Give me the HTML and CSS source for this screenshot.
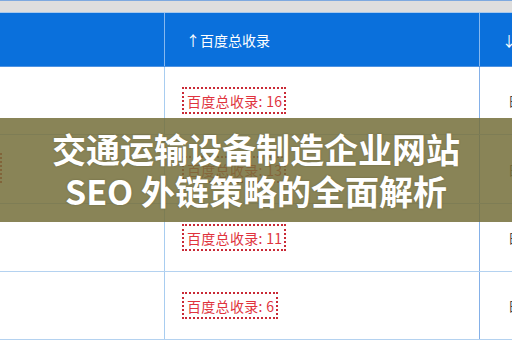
FILE: index.html
```html
<!DOCTYPE html>
<html lang="zh">
<head>
<meta charset="utf-8">
<link rel="stylesheet" href="styles.css">
</head>
<body>
<div class="page">
  <div class="topbar"></div>
  <div class="table">
    <div class="row head">
      <div class="cell c1"></div>
      <div class="cell c2">↑百度总收录</div>
      <div class="cell c3">↓本站</div>
    </div>
    <div class="row r1">
      <div class="cell c1"></div>
      <div class="cell c2"><span class="tag">百度总收录: 16</span></div>
      <div class="cell c3"><span class="gray">日期</span></div>
    </div>
    <div class="row r2">
      <div class="cell c1"><span class="cut"></span></div>
      <div class="cell c2"><span class="tag">百度总收录: 13</span></div>
      <div class="cell c3"><span class="gray">日期</span></div>
    </div>
    <div class="row r3">
      <div class="cell c1"></div>
      <div class="cell c2"><span class="tag">百度总收录: 11</span></div>
      <div class="cell c3"><span class="gray">日期</span></div>
    </div>
    <div class="row r4">
      <div class="cell c1"></div>
      <div class="cell c2"><span class="tag">百度总收录: 6</span></div>
      <div class="cell c3"><span class="gray">日期</span></div>
    </div>
  </div>
  <div class="overlay">
    <div class="title">交通运输设备制造企业网站</div>
    <div class="title">SEO 外链策略的全面解析</div>
  </div>
</div>
</body>
</html>
```

FILE: styles.css
```css
html, body {
  margin: 0;
  padding: 0;
  background: #ffffff;
}
.page {
  position: relative;
  width: 512px;
  height: 340px;
  overflow: hidden;
  font-family: "Noto Sans CJK SC", "Noto Sans", sans-serif;
}
.topbar {
  height: 11px;
  background: #dedede;
  border-top: 1px solid #7ea9df;
}
.row {
  display: grid;
  grid-template-columns: 165px 315px 80px;
  border-bottom: 1px solid #b4d2f0;
}
.cell {
  display: flex;
  align-items: center;
  border-right: 1px solid #9cc2ec;
  white-space: nowrap;
  min-width: 0;
}
.c2 { padding-left: 17px; }
.c3 { border-right: none; }

.head {
  height: 53px;
  background: #0a70dc;
  border-top: 1px solid #a9c9ec;
  border-bottom: 1px solid #4f93e2;
  color: #ffffff;
  font-size: 14px;
}
.head .cell { border-right-color: #86b8ef; }
.head .c2 { padding-left: 21px; }
.head .c3 { padding-left: 22px; }

.r1, .r3, .r4 { height: 67px; }
.r2 { height: 68px; }
.r1 .c1, .r2 .c1, .r3 .c1, .r4 .c1 { border-right-color: #a8cdf0; }
.r1 .c2, .r2 .c2, .r3 .c2, .r4 .c2 { border-right-color: #84b0e8; }

.tag {
  display: inline-block;
  border: 2px dotted #c92a36;
  color: #e0333d;
  font-size: 14px;
  line-height: 18px;
  padding: 3px 2px 2px 3px;
  letter-spacing: 0.3px;
}
.gray {
  color: #444444;
  font-size: 13px;
  padding-left: 28px;
}
.cut {
  display: block;
  width: 40px;
  height: 26px;
  margin-left: -42px;
  margin-top: -3px;
  border: 2px dotted #c92a36;
}

.overlay {
  position: absolute;
  left: 0;
  right: 0;
  top: 118px;
  height: 104px;
  background: rgba(116, 111, 58, 0.85);
  display: flex;
  flex-direction: column;
  align-items: center;
  justify-content: center;
}
.title {
  color: #ffffff;
  font-size: 34px;
  font-weight: 700;
  line-height: 42px;
  white-space: nowrap;
  text-shadow: 0 0 2px rgba(60, 55, 30, 0.4);
}
```
